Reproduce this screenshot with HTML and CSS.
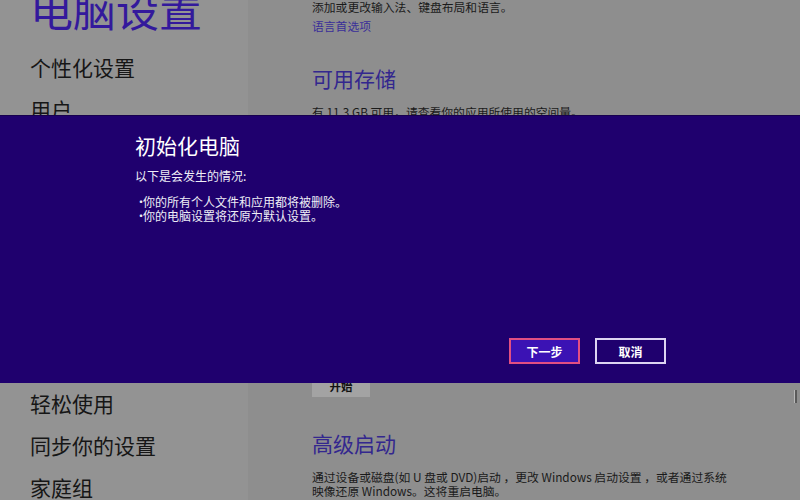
FILE: index.html
```html
<!DOCTYPE html>
<html lang="zh-CN">
<head>
<meta charset="utf-8">
<title>电脑设置</title>
<link rel="stylesheet" href="styles.css">
</head>
<body>
<div class="page">
  <nav class="nav">
    <h1 class="nav-title">电脑设置</h1>
    <ul class="nav-list">
      <li>个性化设置</li>
      <li>用户</li>
      <li>通知</li>
      <li>搜索</li>
      <li>共享</li>
      <li>常规</li>
      <li>隐私</li>
      <li>设备</li>
      <li>轻松使用</li>
      <li>同步你的设置</li>
      <li>家庭组</li>
    </ul>
  </nav>
  <main class="content">
    <p class="text">添加或更改输入法、键盘布局和语言。</p>
    <p class="text link">语言首选项</p>
    <h2 class="heading first">可用存储</h2>
    <p class="text after-heading">有 11.3 GB 可用，请查看你的应用所使用的空间量。</p>
    <div class="btn hidden-gap">查看应用大小</div>
    <h2 class="heading">恢复电脑而不影响你的文件</h2>
    <p class="text after-heading">如果电脑运行不正常，你可以在不丢失个人文件的情况下恢复电脑。</p>
    <div class="btn hidden-gap">开始</div>
    <h2 class="heading">删除所有内容并重新安装 Windows</h2>
    <p class="text after-heading">如果要回收电脑或完全重新开始，可以将电脑初始化为出厂设置。</p>
    <div class="btn start-gap">开始</div>
    <h2 class="heading">高级启动</h2>
    <p class="text after-heading">通过设备或磁盘(如 U 盘或 DVD)启动 ，更改 Windows 启动设置 ，或者通过系统<br>映像还原 Windows。这将重启电脑。</p>
  </main>
</div>
<div class="scroll-thumb"></div>
<section class="dialog">
  <h2 class="dialog-title">初始化电脑</h2>
  <p class="dialog-text">以下是会发生的情况:</p>
  <ul class="dialog-list">
    <li>你的所有个人文件和应用都将被删除。</li>
    <li>你的电脑设置将还原为默认设置。</li>
  </ul>
  <div class="dialog-actions">
    <div class="dlg-btn primary">下一步</div>
    <div class="dlg-btn">取消</div>
  </div>
</section>
</body>
</html>
```
FILE: styles.css
```css
* { box-sizing: border-box; }
html, body {
  margin: 0;
  padding: 0;
}
body {
  width: 800px;
  height: 500px;
  overflow: hidden;
  position: relative;
  font-family: "Noto Sans CJK SC", "Noto Sans", sans-serif;
  color: #1a1a1a;
  background: #8e8e8e;
}
.page {
  display: flex;
  height: 500px;
  overflow: hidden;
}
.nav {
  width: 248px;
  flex: none;
  background: #939393;
  padding-left: 30px;
  overflow: hidden;
}
.nav-title {
  margin: -13px 0 0 0;
  font-size: 43px;
  line-height: 43px;
  font-weight: 400;
  color: #33199c;
  white-space: nowrap;
}
.nav-list {
  list-style: none;
  margin: 16px 0 0 0;
  padding: 0;
}
.nav-list li {
  font-size: 21px;
  line-height: 42px;
  height: 42px;
  color: #161616;
  white-space: nowrap;
}
.content {
  flex: 1;
  padding-left: 64px;
  overflow: hidden;
}
.text {
  margin: 0;
  font-size: 11.8px;
  line-height: 14px;
  color: #1a1a1a;
  white-space: nowrap;
}
.link {
  margin-top: 5px;
  color: #3a2e99;
}
.heading {
  margin: 32px 0 0 0;
  font-size: 21px;
  line-height: 28px;
  font-weight: 400;
  color: #33278e;
  white-space: nowrap;
}
.heading.first {
  margin-top: 31px;
}
.after-heading {
  margin-top: 13px;
}
.btn {
  display: flex;
  align-items: center;
  justify-content: center;
  width: 58px;
  height: 22px;
  background: #a3a3a3;
  color: #111;
  font-size: 11.5px;
  font-weight: 700;
  white-space: nowrap;
  overflow: hidden;
}
.hidden-gap {
  margin-top: 10px;
}
.start-gap {
  margin-top: 18px;
}
.dialog {
  position: absolute;
  left: 0;
  top: 115px;
  width: 800px;
  height: 268px;
  background: #1f006e;
  border-top: 1px solid #17004f;
  padding: 15px 134px 19px 135px;
  display: flex;
  flex-direction: column;
  color: #fff;
}
.dialog-title {
  margin: 0;
  font-size: 21px;
  line-height: 28px;
  font-weight: 400;
  color: #ffffff;
}
.dialog-text {
  margin: 10px 0 0 0;
  font-size: 12px;
  line-height: 14px;
  color: #eeeef6;
}
.dialog-list {
  list-style: none;
  margin: 12px 0 0 0;
  padding: 0;
  font-size: 12px;
  line-height: 14px;
  color: #eeeef6;
}
.dialog-list li::before {
  content: "•";
  display: inline-block;
  width: 8px;
}
.dialog-actions {
  margin-top: auto;
  display: flex;
  justify-content: flex-end;
  gap: 15px;
}
.dlg-btn {
  width: 71px;
  height: 26px;
  border: 2px solid #dcd4f2;
  background: #1f006e;
  display: flex;
  align-items: center;
  justify-content: center;
  font-size: 12px;
  font-weight: 700;
  color: #fff;
}
.dlg-btn.primary {
  border-color: #e24f82;
  background: #3b12b4;
}
.scroll-thumb {
  position: absolute;
  right: 3px;
  top: 390px;
  width: 3px;
  height: 13px;
  background: #5a5a5a;
  border-left: 1px solid #b8b8b8;
}
```
